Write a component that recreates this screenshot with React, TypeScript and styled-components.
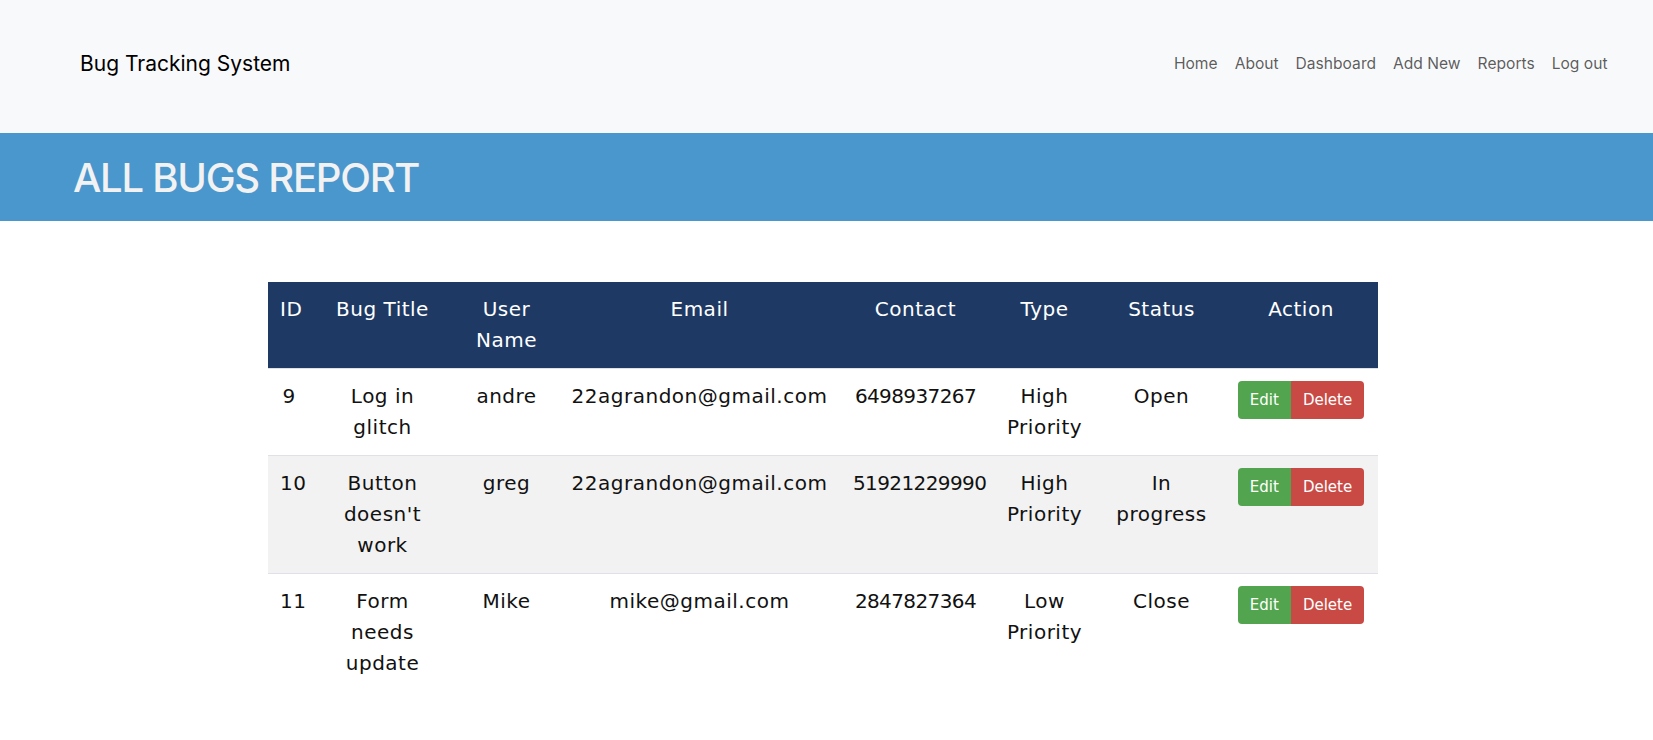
import React from "react";
import styled, { createGlobalStyle } from "styled-components";

const GlobalStyle = createGlobalStyle`
  html, body { margin: 0; padding: 0; background: #ffffff; }
  body { font-family: "Inter", "Liberation Sans", sans-serif; }
  * { box-sizing: border-box; }
`;

const NavBar = styled.nav`
  height: 133px;
  background: #f8f9fa;
  display: flex;
  align-items: center;
  justify-content: space-between;
  padding: 0 37px 7px 80px;
`;

const Brand = styled.a`
  font-family: "Inter", "Liberation Sans", sans-serif;
  font-size: 21px;
  color: #000000;
  text-decoration: none;
`;

const NavList = styled.ul`
  display: flex;
  margin: 0;
  padding: 0;
  list-style: none;
`;

const NavLink = styled.a`
  display: block;
  padding: 0 8.5px;
  font-size: 15.6px;
  color: rgba(0, 0, 0, 0.65);
  text-decoration: none;
`;

const Banner = styled.header`
  height: 88px;
  background: #4a97cd;
  display: flex;
  align-items: center;
  padding-left: 73px;
`;

const Title = styled.h1`
  margin: 0;
  font-family: "Inter", "Liberation Sans", sans-serif;
  font-weight: 500;
  font-size: 40px;
  letter-spacing: -1.25px;
  color: #f2f2f2;
`;

const Main = styled.main`
  display: flex;
  justify-content: center;
  padding: 61px 7px 40px 0;
`;

const Table = styled.table`
  width: 1110px;
  border-collapse: collapse;
  table-layout: fixed;
  font-family: "DejaVu Sans", "Liberation Sans", sans-serif;
  font-size: 20px;
  line-height: 31px;
  letter-spacing: 0.5px;
`;

const HeadRow = styled.tr`
  background: #1e3a64;
`;

const Th = styled.th`
  padding: 12px;
  color: #ffffff;
  font-weight: 400;
  text-align: center;
  vertical-align: top;
`;

const Row = styled.tr<{ $striped: boolean }>`
  background: ${(p) => (p.$striped ? "#f2f2f2" : "#ffffff")};
`;

const Td = styled.td<{ $compact?: boolean }>`
  padding: 12px;
  border-top: 1px solid #dee2e6;
  color: #111111;
  text-align: center;
  vertical-align: top;
  letter-spacing: ${(p) => (p.$compact ? "-0.6px" : "inherit")};
`;

const ButtonGroup = styled.div`
  display: inline-flex;
  border-radius: 4px;
  overflow: hidden;
`;

const ActionButton = styled.button<{ $variant: "edit" | "delete" }>`
  height: 38px;
  padding: 0 12px;
  border: none;
  font-family: "DejaVu Sans", "Liberation Sans", sans-serif;
  font-size: 15px;
  letter-spacing: 0;
  color: #ffffff;
  background: ${(p) => (p.$variant === "edit" ? "#52a54e" : "#c94a45")};
  cursor: pointer;
`;

const columns = [
  { label: "ID", width: 42 },
  { label: "Bug Title", width: 145 },
  { label: "User Name", width: 103 },
  { label: "Email", width: 283 },
  { label: "Contact", width: 149 },
  { label: "Type", width: 109 },
  { label: "Status", width: 125 },
  { label: "Action", width: 154 },
];

const bugs = [
  {
    id: 9,
    title: "Log in glitch",
    user: "andre",
    email: "22agrandon@gmail.com",
    contact: "6498937267",
    type: "High Priority",
    status: "Open",
  },
  {
    id: 10,
    title: "Button doesn't work",
    user: "greg",
    email: "22agrandon@gmail.com",
    contact: "51921229990",
    type: "High Priority",
    status: "In progress",
  },
  {
    id: 11,
    title: "Form needs update",
    user: "Mike",
    email: "mike@gmail.com",
    contact: "2847827364",
    type: "Low Priority",
    status: "Close",
  },
];

const navItems = ["Home", "About", "Dashboard", "Add New", "Reports", "Log out"];

export default function App() {
  return (
    <>
      <GlobalStyle />
      <NavBar>
        <Brand href="#">Bug Tracking System</Brand>
        <NavList>
          {navItems.map((item) => (
            <li key={item}>
              <NavLink href="#">{item}</NavLink>
            </li>
          ))}
        </NavList>
      </NavBar>
      <Banner>
        <Title>ALL BUGS REPORT</Title>
      </Banner>
      <Main>
        <Table>
          <colgroup>
            {columns.map((c) => (
              <col key={c.label} style={{ width: c.width }} />
            ))}
          </colgroup>
          <thead>
            <HeadRow>
              {columns.map((c) => (
                <Th key={c.label}>{c.label}</Th>
              ))}
            </HeadRow>
          </thead>
          <tbody>
            {bugs.map((b, i) => (
              <Row key={b.id} $striped={i % 2 === 1}>
                <Td>{b.id}</Td>
                <Td>{b.title}</Td>
                <Td>{b.user}</Td>
                <Td>{b.email}</Td>
                <Td $compact>{b.contact}</Td>
                <Td>{b.type}</Td>
                <Td>{b.status}</Td>
                <Td>
                  <ButtonGroup>
                    <ActionButton $variant="edit">Edit</ActionButton>
                    <ActionButton $variant="delete">Delete</ActionButton>
                  </ButtonGroup>
                </Td>
              </Row>
            ))}
          </tbody>
        </Table>
      </Main>
    </>
  );
}
